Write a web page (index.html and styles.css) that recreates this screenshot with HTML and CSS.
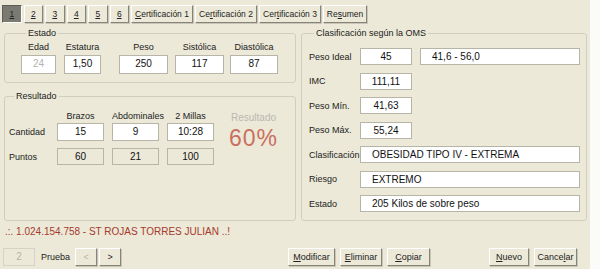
FILE: index.html
```html
<!DOCTYPE html>
<html lang="es">
<head>
    <meta charset="UTF-8">
    <title>Certificación</title>
    <link rel="stylesheet" href="styles.css">
</head>
<body>
    <div class="window">
        <div class="tabs">
            <button class="tab active"><u>1</u></button>
            <button class="tab"><u>2</u></button>
            <button class="tab"><u>3</u></button>
            <button class="tab"><u>4</u></button>
            <button class="tab"><u>5</u></button>
            <button class="tab"><u>6</u></button>
            <button class="tab wide"><u>C</u>ertificación 1</button>
            <button class="tab wide">Ce<u>r</u>tificación 2</button>
            <button class="tab wide">Cer<u>t</u>ificación 3</button>
            <button class="tab">Re<u>s</u>umen</button>
        </div>

        <div class="main">
            <div class="left">
                <fieldset class="group estado">
                    <legend>Estado</legend>
                    <div class="estado-row">
                        <div class="field f-edad"><span>Edad</span><div class="box disabled">24</div></div>
                        <div class="field f-estatura"><span>Estatura</span><div class="box">1,50</div></div>
                        <div class="field f-peso"><span>Peso</span><div class="box">250</div></div>
                        <div class="field f-sis"><span>Sistólica</span><div class="box">117</div></div>
                        <div class="field f-dia"><span>Diastólica</span><div class="box">87</div></div>
                    </div>
                </fieldset>

                <fieldset class="group resultado">
                    <legend>Resultado</legend>
                    <div class="res-grid">
                        <div></div>
                        <div class="col-head">Brazos</div>
                        <div class="col-head">Abdominales</div>
                        <div class="col-head">2 Millas</div>
                        <div class="res-head">Resultado</div>

                        <div class="row-label">Cantidad</div>
                        <div class="box">15</div>
                        <div class="box">9</div>
                        <div class="box">10:28</div>
                        <div class="res-value">60%</div>

                        <div class="row-label pts">Puntos</div>
                        <div class="box flat pts">60</div>
                        <div class="box flat pts">21</div>
                        <div class="box flat pts">100</div>
                    </div>
                </fieldset>
            </div>

            <fieldset class="group oms">
                <legend>Clasificación según la OMS</legend>
                <div class="oms-row"><span class="oms-label">Peso Ideal</span><div class="box small">45</div><div class="box range">41,6 - 56,0</div></div>
                <div class="oms-row"><span class="oms-label">IMC</span><div class="box small">111,11</div></div>
                <div class="oms-row"><span class="oms-label">Peso Mín.</span><div class="box small">41,63</div></div>
                <div class="oms-row"><span class="oms-label">Peso Máx.</span><div class="box small">55,24</div></div>
                <div class="oms-row"><span class="oms-label">Clasificación</span><div class="box long">OBESIDAD TIPO IV - EXTREMA</div></div>
                <div class="oms-row"><span class="oms-label">Riesgo</span><div class="box long">EXTREMO</div></div>
                <div class="oms-row"><span class="oms-label">Estado</span><div class="box long">205 Kilos de sobre peso</div></div>
            </fieldset>
        </div>

        <p class="status">.:. 1.024.154.758 - ST ROJAS TORRES JULIAN ..!</p>

        <div class="bottom">
            <div class="box disabled page">2</div>
            <span class="prueba">Prueba</span>
            <button class="btn nav" disabled>&lt;</button>
            <button class="btn nav">&gt;</button>

            <div class="actions">
                <button class="btn b-mod"><u>M</u>odificar</button>
                <button class="btn b-eli"><u>E</u>liminar</button>
                <button class="btn b-cop"><u>C</u>opiar</button>
            </div>
            <div class="actions end">
                <button class="btn b-nue"><u>N</u>uevo</button>
                <button class="btn b-can">Cance<u>l</u>ar</button>
            </div>
        </div>
    </div>
</body>
</html>
```

FILE: styles.css
```css
* {
    margin: 0;
    padding: 0;
    box-sizing: border-box;
}

body {
    background: #fbfbf9;
    font-family: 'Liberation Sans', Arial, sans-serif;
    font-size: 9px;
    color: #222;
}

.window {
    width: 590px;
    height: 269px;
    background: #ece9d8;
    overflow: hidden;
}

u {
    text-decoration: underline;
}

/* pestañas */
.tabs {
    display: flex;
    gap: 2px;
    padding: 5px 0 0 2px;
    height: 23px;
}

.tab {
    font: inherit;
    font-size: 8.5px;
    color: #222;
    height: 18px;
    width: 19.5px;
    background: #ece9d8;
    border: 1px solid;
    border-color: #fff #85837a #85837a #fff;
    box-shadow: 1px 1px 0 #c9c6b6;
    white-space: nowrap;
}

.tab.wide {
    width: 62px;
}

.tab:last-child {
    width: 44px;
}

.tab.active {
    background: #7a7972;
    border-color: #5d5c55 #fff #fff #5d5c55;
    box-shadow: none;
}

/* grupos */
.main {
    display: flex;
    gap: 5px;
    padding-left: 4px;
    padding-top: 5px;
}

.left {
    width: 292px;
}

.group {
    border: 1px solid #d0cebf;
    border-radius: 3px;
    min-width: 0;
}

.group legend {
    margin-left: 5px;
    padding: 0 2px;
    line-height: 11px;
    color: #222;
}

.box {
    background: #fff;
    border: 1px solid #b7b5a8;
    height: 18px;
    line-height: 16px;
    text-align: center;
    font-size: 10px;
    color: #111;
    white-space: nowrap;
}

.box.disabled {
    color: #b4b4b0;
}

.box.flat {
    background: #ece9d8;
}

/* estado */
.estado {
    padding: 3px 0 8px 16px;
}

.estado-row {
    display: flex;
}

.field {
    display: flex;
    flex-direction: column;
    align-items: center;
    gap: 2px;
}

.field span {
    line-height: 11px;
    white-space: nowrap;
}

.field .box {
    width: 100%;
    height: 19px;
}

.f-edad { width: 35px; margin-right: 8px; }
.f-estatura { width: 37px; margin-right: 18px; }
.f-peso { width: 49px; margin-right: 7px; }
.f-sis { width: 49px; margin-right: 6px; }
.f-dia { width: 48px; }

/* resultado */
.resultado {
    margin-top: 8px;
    padding: 9px 0 55px 4px;
}

.res-grid {
    display: grid;
    grid-template-columns: 40px 47px 47px 47px 63px;
    column-gap: 8px;
    align-items: center;
}

.col-head {
    text-align: center;
    line-height: 11px;
    margin-bottom: 1px;
    white-space: nowrap;
}

.res-head {
    text-align: center;
    color: #b9b8b2;
    font-size: 10px;
    line-height: 11px;
}

.res-value {
    grid-row: 2 / 4;
    grid-column: 5;
    align-self: start;
    text-align: center;
    color: #c9705f;
    font-size: 23px;
    line-height: 30px;
    letter-spacing: 1px;
}

.row-label {
    white-space: nowrap;
}

.pts {
    margin-top: 7px;
}

.box.pts {
    height: 17px;
    line-height: 15px;
}

/* OMS */
.oms {
    width: 286px;
    padding: 9px 0 3px 7px;
    display: flex;
    flex-direction: column;
    gap: 7.5px;
}

.oms-row {
    display: flex;
    align-items: center;
    gap: 8px;
}

.oms-label {
    width: 43px;
    white-space: nowrap;
}

.oms-row .box {
    height: 17px;
    line-height: 15px;
}

.box.small {
    width: 52px;
}

.box.range {
    width: 160px;
    text-align: left;
    padding-left: 11px;
}

.box.long {
    width: 220px;
    text-align: left;
    padding-left: 11px;
}

/* estado inferior */
.status {
    color: #a63a2c;
    font-size: 10px;
    line-height: 12px;
    margin: 5px 0 0 5px;
}

.bottom {
    display: flex;
    align-items: center;
    padding-left: 3px;
    margin-top: 10px;
}

.box.page {
    width: 32px;
    background: #ece9d8;
    border-color: #d6d3c4;
}

.prueba {
    margin: 0 5px 0 6px;
}

.btn {
    font: inherit;
    color: #222;
    height: 18px;
    background: #ece9d8;
    border: 1px solid;
    border-color: #fff #85837a #85837a #fff;
    box-shadow: 1px 1px 0 #c9c6b6;
}

.btn:disabled {
    color: #b4b4b0;
}

.btn.nav {
    width: 22px;
    margin-right: 2px;
}

.actions {
    display: flex;
    gap: 5px;
    margin-left: 165px;
}

.actions.end {
    margin-left: 59px;
}

.b-mod { width: 47px; }
.b-eli { width: 42px; }
.b-cop { width: 43px; }
.b-nue { width: 40px; }
.b-can { width: 43px; }
```
